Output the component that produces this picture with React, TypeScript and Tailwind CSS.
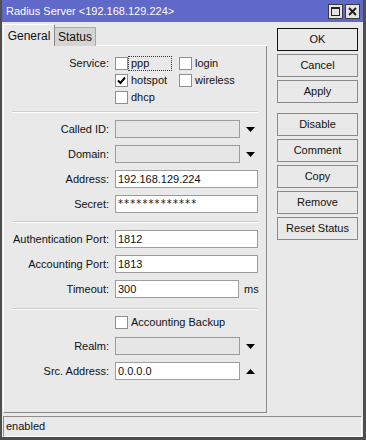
import React from "react";

// small helpers for the winbox style dialog
function Check({ checked = false }: { checked?: boolean }) {
  return (
    <span className="flex h-[13px] w-[13px] shrink-0 items-center justify-center border border-[#8e8e8e] bg-white">
      {checked && (
        <svg width="9" height="9" viewBox="0 0 9 9">
          <path d="M1 4.5 L3.5 7 L8 1.5" fill="none" stroke="#000" strokeWidth="2" />
        </svg>
      )}
    </span>
  );
}

function CheckItem({
  label,
  checked,
  focused,
  width,
}: {
  label: string;
  checked?: boolean;
  focused?: boolean;
  width: string;
}) {
  return (
    <div className={`flex h-[17px] items-center ${width}`}>
      <Check checked={checked} />
      <span
        className={`flex h-[15px] w-[44px] items-center border px-[2px] leading-none ${
          focused ? "border-dotted border-[#333]" : "border-transparent"
        }`}
      >
        {label}
      </span>
    </div>
  );
}

function Row({
  label,
  children,
  className = "",
}: {
  label: string;
  children?: React.ReactNode;
  className?: string;
}) {
  return (
    <div className={`flex h-[18px] items-center ${className}`}>
      <span className="w-[105px] text-right leading-none">{label}</span>
      <div className="ml-[6px] flex items-center">{children}</div>
    </div>
  );
}

function TextBox({ value, w = "w-[143px]" }: { value: string; w?: string }) {
  return (
    <div className={`flex h-[18px] items-center border border-[#9c9c9c] bg-white px-[2px] leading-none ${w}`}>
      {value}
    </div>
  );
}

function Arrow({ up = false }: { up?: boolean }) {
  return (
    <svg width="9" height="5" viewBox="0 0 9 5" className="ml-[6px]">
      <path d={up ? "M0 5 L4.5 0 L9 5 Z" : "M0 0 L9 0 L4.5 5 Z"} fill="#000" />
    </svg>
  );
}

function Combo({ value = "", up = false, disabled = false }: { value?: string; up?: boolean; disabled?: boolean }) {
  return (
    <>
      <div
        className={`flex h-[18px] w-[125px] items-center border border-[#9c9c9c] px-[2px] leading-none ${
          disabled ? "bg-[#e6e6e6]" : "bg-white"
        }`}
      >
        {value}
      </div>
      <Arrow up={up} />
    </>
  );
}

function Separator({ className = "" }: { className?: string }) {
  return <div className={`ml-[8px] w-[246px] border-t border-b border-t-[#cdcdcd] border-b-white ${className}`} />;
}

function Btn({ label, primary = false, className = "" }: { label: string; primary?: boolean; className?: string }) {
  return (
    <button
      className={`flex h-[23px] w-[81px] items-center justify-center border bg-[#e9e9e9] leading-none text-[#111] ${
        primary ? "border-[#111]" : "border-[#8a8a8a]"
      } ${className}`}
    >
      {label}
    </button>
  );
}

export default function App() {
  return (
    <div className="flex h-[440px] w-[366px] flex-col border-b-[3px] border-l-2 border-r-[3px] border-[#4e4e4e] bg-[#e9e9e9] font-['Liberation_Sans',Arial,sans-serif] text-[11px] text-[#111]">
      {/* title bar */}
      <div className="flex h-[22px] shrink-0 items-center justify-between bg-[#6068c8] pl-[4px] pr-[3px]">
        <span className="text-[11px] leading-none text-white">Radius Server &lt;192.168.129.224&gt;</span>
        <div className="flex gap-[2px]">
          <span className="flex h-[15px] w-[15px] items-center justify-center border border-[#3a3a3a] bg-[#e4e4e4]">
            <span className="h-[9px] w-[9px] border border-t-2 border-[#222]" />
          </span>
          <span className="flex h-[15px] w-[15px] items-center justify-center border border-[#3a3a3a] bg-[#e4e4e4]">
            <svg width="9" height="9" viewBox="0 0 9 9">
              <path d="M1 1 L8 8 M8 1 L1 8" stroke="#222" strokeWidth="2" />
            </svg>
          </span>
        </div>
      </div>

      {/* body */}
      <div className="flex h-[391px] shrink-0 pl-[1px] pt-[2px]">
        <div className="flex w-[264px] flex-col">
          {/* tabs */}
          <div className="flex h-[22px] items-end">
            <div className="flex h-[22px] w-[52px] items-center justify-center border-l border-t border-r border-l-white border-t-white border-r-[#8a8a8a] bg-[#e9e9e9] text-[12px] leading-none">
              General
            </div>
            <div className="flex h-[19px] w-[41px] items-center border-t border-r border-[#a8a8a8] bg-[#d4d4d4] pl-[3px] text-[12px] leading-none">
              Status
            </div>
            <div className="h-[1px] flex-1 bg-white" />
          </div>

          {/* panel */}
          <div className="flex h-[367px] flex-col border-b border-l border-r border-b-[#8a8a8a] border-l-white border-r-[#8a8a8a] pt-[9px]">
            <div className="flex">
              <span className="flex h-[17px] w-[105px] items-center justify-end leading-none">Service:</span>
              <div className="ml-[6px] flex flex-col">
                <div className="flex">
                  <CheckItem label="ppp" focused width="w-[64px]" />
                  <CheckItem label="login" width="w-[64px]" />
                </div>
                <div className="flex">
                  <CheckItem label="hotspot" checked width="w-[64px]" />
                  <CheckItem label="wireless" width="w-[64px]" />
                </div>
                <div className="flex">
                  <CheckItem label="dhcp" width="w-[64px]" />
                </div>
              </div>
            </div>

            <Separator className="mt-[5px]" />

            <Row label="Called ID:" className="mt-[7px]">
              <Combo disabled />
            </Row>
            <Row label="Domain:" className="mt-[7px]">
              <Combo disabled />
            </Row>
            <Row label="Address:" className="mt-[7px]">
              <TextBox value="192.168.129.224" />
            </Row>
            <Row label="Secret:" className="mt-[7px]">
              <div className="flex h-[18px] w-[143px] items-center border border-[#9c9c9c] bg-white px-[2px] font-['DejaVu_Sans',sans-serif] text-[10px] leading-none tracking-[1.1px]">
                *************
              </div>
            </Row>

            <Separator className="mt-[8px]" />

            <Row label="Authentication Port:" className="mt-[7px]">
              <TextBox value="1812" />
            </Row>
            <Row label="Accounting Port:" className="mt-[7px]">
              <TextBox value="1813" />
            </Row>
            <Row label="Timeout:" className="mt-[7px]">
              <TextBox value="300" w="w-[124px]" />
              <span className="ml-[5px] leading-none">ms</span>
            </Row>

            <Separator className="mt-[10px]" />

            <div className="mt-[4px] flex h-[17px] items-center pl-[111px]">
              <Check />
              <span className="ml-[3px] leading-none">Accounting Backup</span>
            </div>

            <Row label="Realm:" className="mt-[6px]">
              <Combo disabled />
            </Row>
            <Row label="Src. Address:" className="mt-[7px]">
              <Combo value="0.0.0.0" up />
            </Row>
          </div>
        </div>

        {/* right buttons */}
        <div className="ml-[10px] flex flex-col gap-[3px] pt-[4px]">
          <Btn label="OK" primary />
          <Btn label="Cancel" />
          <Btn label="Apply" />
          <Btn label="Disable" className="mt-[7px]" />
          <Btn label="Comment" />
          <Btn label="Copy" />
          <Btn label="Remove" />
          <Btn label="Reset Status" />
        </div>
      </div>

      {/* status bar */}
      <div className="ml-[1px] mr-[1px] mt-[3px] flex h-[21px] items-center border border-t-[#8d8d8d] border-l-[#8d8d8d] border-b-white border-r-white pl-[2px] leading-none">
        enabled
      </div>
    </div>
  );
}
